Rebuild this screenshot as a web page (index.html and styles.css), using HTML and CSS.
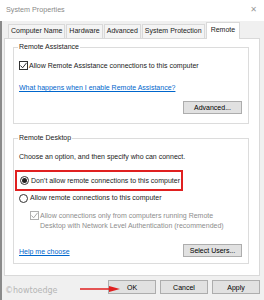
FILE: index.html
```html
<!DOCTYPE html>
<html lang="en">
<head>
    <meta charset="UTF-8">
    <title>System Properties</title>
    <link rel="stylesheet" href="styles.css">
</head>
<body>
    <div class="window">
        <!-- Title bar -->
        <div class="titlebar">
            <span class="title">System Properties</span>
            <span class="close">&#x2715;</span>
        </div>

        <!-- Tabs -->
        <div class="tabs">
            <div class="tab">Computer Name</div>
            <div class="tab">Hardware</div>
            <div class="tab">Advanced</div>
            <div class="tab">System Protection</div>
            <div class="tab active">Remote</div>
        </div>

        <div class="panel">
            <!-- Remote Assistance -->
            <fieldset class="group group-assist">
                <legend>Remote Assistance</legend>
                <div class="check-row">
                    <span class="checkbox">
                        <svg viewBox="0 0 9 9" width="9" height="9"><path d="M1.5 4.5 L3.6 6.8 L7.6 1.8" fill="none" stroke="#333" stroke-width="1"/></svg>
                    </span>
                    <span>Allow Remote Assistance connections to this computer</span>
                </div>
                <a class="link link-assist" href="#">What happens when I enable Remote Assistance?</a>
                <div class="btn-row">
                    <button class="btn btn-wide">Advanced...</button>
                </div>
            </fieldset>

            <!-- Remote Desktop -->
            <fieldset class="group group-desktop">
                <legend>Remote Desktop</legend>
                <p class="hint">Choose an option, and then specify who can connect.</p>
                <div class="highlight">
                    <div class="radio-row">
                        <span class="radio on"></span>
                        <span>Don’t allow remote connections to this computer</span>
                    </div>
                </div>
                <div class="radio-row radio-second">
                    <span class="radio"></span>
                    <span>Allow remote connections to this computer</span>
                </div>
                <div class="check-row disabled">
                    <span class="checkbox">
                        <svg viewBox="0 0 9 9" width="9" height="9"><path d="M1.5 4.5 L3.6 6.8 L7.6 1.8" fill="none" stroke="#a8a8a8" stroke-width="1"/></svg>
                    </span>
                    <span>Allow connections only from computers running Remote<br>Desktop with Network Level Authentication (recommended)</span>
                </div>
                <div class="bottom-row">
                    <a class="link" href="#">Help me choose</a>
                    <button class="btn btn-wide">Select Users...</button>
                </div>
            </fieldset>
        </div>

        <!-- Dialog buttons -->
        <div class="footer">
            <span class="watermark">©howtoedge</span>
            <svg class="arrow" viewBox="0 0 40 6" width="40" height="6">
                <line x1="0" y1="3" x2="32" y2="3" stroke="#e02020" stroke-width="1.5"/>
                <polygon points="29,0 40,3 29,6" fill="#e02020"/>
            </svg>
            <div class="buttons">
                <button class="btn">OK</button>
                <button class="btn">Cancel</button>
                <button class="btn">Apply</button>
            </div>
        </div>
    </div>
</body>
</html>
```

FILE: styles.css
```css
/* Base */
:root {
    --dialog-bg: #f0f0f0;
    --border: #d9d9d9;
    --group-border: #dcdcdc;
    --text: #1a1a1a;
    --link: #0066cc;
    --red: #e02020;
}

* {
    margin: 0;
    padding: 0;
    box-sizing: border-box;
}

body {
    width: 264px;
    height: 300px;
    overflow: hidden;
    font-family: 'Liberation Sans', Arial, sans-serif;
    font-size: 7px;
    color: var(--text);
    background-color: var(--dialog-bg);
}

.window {
    height: 300px;
    display: flex;
    flex-direction: column;
    box-shadow: inset 2px 0 0 #8a8a8a;
}

/* Title bar */
.titlebar {
    height: 21px;
    background-color: #ffffff;
    display: flex;
    align-items: center;
    justify-content: space-between;
    padding: 0 7px 3px 6px;
}

.title {
    font-size: 7.2px;
    color: #8a8a8a;
}

.close {
    font-family: 'DejaVu Sans', sans-serif;
    font-size: 8px;
    color: #9a9a9a;
}

/* Tabs */
.tabs {
    height: 17px;
    display: flex;
    align-items: flex-end;
    padding-left: 8px;
}

.tab {
    height: 14px;
    line-height: 12px;
    padding: 0 2px;
    margin-right: 1px;
    border: 1px solid var(--border);
    border-bottom: none;
    background-color: #f4f4f4;
    color: #222;
}

.tab.active {
    height: 17px;
    line-height: 13px;
    padding: 0 4px 2px;
    background-color: #ffffff;
    margin-bottom: -1px;
    position: relative;
}

/* Panel */
.panel {
    height: 238px;
    margin: 0 4px;
    padding: 3px 10px 0 8px;
    background-color: #ffffff;
    border: 1px solid var(--border);
}

.group {
    border: 1px solid var(--group-border);
    padding: 0 6px 0 5px;
    min-width: 0;
    display: flex;
    flex-direction: column;
}

.group legend {
    line-height: 10px;
    padding: 0 1px;
    margin-left: -1px;
}

.group-assist {
    height: 82px;
}

.group-desktop {
    margin-top: 9px;
    height: 131px;
}

.check-row {
    display: flex;
    align-items: flex-start;
    gap: 1px;
    line-height: 10px;
    margin-top: 9px;
}

.checkbox {
    width: 9px;
    height: 9px;
    flex-shrink: 0;
    border: 1px solid #333;
    display: flex;
    align-items: center;
    justify-content: center;
}

.checkbox svg {
    display: block;
    margin: -1px;
}

.link {
    color: var(--link);
    text-decoration: underline;
    line-height: 10px;
}

.link-assist {
    margin-top: 12px;
}

.btn-row {
    display: flex;
    justify-content: flex-end;
    margin-top: 8px;
}

.btn {
    font-family: inherit;
    font-size: 7px;
    color: #000;
    height: 14px;
    background-color: #e1e1e1;
    border: 1px solid #adadad;
}

.btn-wide {
    width: 59px;
    height: 13px;
}

.hint {
    line-height: 10px;
    margin-top: 9px;
}

.highlight {
    margin: 8px 0 0 -4px;
    width: 168px;
    height: 21px;
    border: 2px solid var(--red);
    padding-left: 3px;
    display: flex;
    align-items: center;
}

.radio-row {
    display: flex;
    align-items: center;
    gap: 2px;
    line-height: 10px;
}

.radio-second {
    margin-top: 2px;
}

.radio {
    width: 9px;
    height: 9px;
    border: 1px solid #333;
    border-radius: 50%;
    display: flex;
    align-items: center;
    justify-content: center;
}

.radio.on::after {
    content: "";
    width: 5px;
    height: 5px;
    border-radius: 50%;
    background-color: #222;
}

.check-row.disabled {
    margin: 8px 0 0 11px;
    color: #8d8d8d;
}

.check-row.disabled .checkbox {
    border-color: #b0b0b0;
}

.bottom-row {
    display: flex;
    justify-content: space-between;
    align-items: flex-end;
    margin-top: 13px;
}

/* Footer */
.footer {
    flex: 1;
    position: relative;
    display: flex;
    justify-content: space-between;
    align-items: flex-start;
    padding: 4px 4px 0 5px;
}

.watermark {
    margin-top: 6px;
    font-family: 'DejaVu Sans', sans-serif;
    font-size: 8px;
    color: #b5b5b5;
}

.arrow {
    position: absolute;
    left: 80px;
    top: 10px;
}

.buttons {
    display: flex;
    gap: 4px;
}

.buttons .btn {
    width: 48px;
}
```
